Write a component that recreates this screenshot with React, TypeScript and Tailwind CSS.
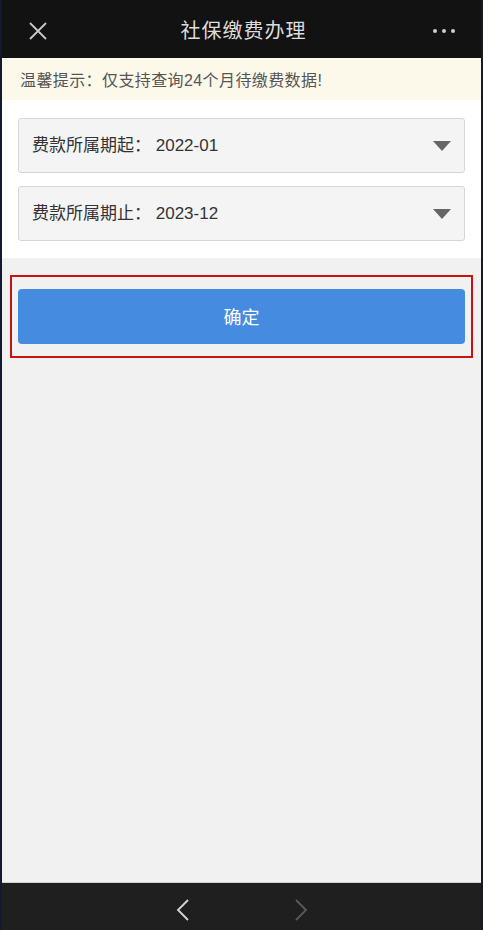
const font = "font-['Liberation_Sans','Noto_Sans_CJK_SC',sans-serif]";

const periods = [
  { label: "费款所属期起：", value: "2022-01" },
  { label: "费款所属期止：", value: "2023-12" },
];

const App = () => {
  return (
    <div className={`h-[930px] w-[483px] bg-[#141a2c] pl-[2px] pr-[2px] ${font}`}>
      <div className="flex h-full flex-col bg-[#f1f1f1]">
        {/* header */}
        <div className="flex h-[58px] shrink-0 items-center justify-between bg-[#121212] px-[26px]">
          <svg width="20" height="20" viewBox="0 0 20 20" className="mt-[4px]">
            <path d="M2 2 L18 18 M18 2 L2 18" stroke="#c9c9c9" strokeWidth="1.8" fill="none" />
          </svg>
          <h1 className="ml-[6px] mt-[3px] text-[20px] tracking-[1px] text-[#dcdcdc]">社保缴费办理</h1>
          <div className="mt-[4px] flex gap-[5px]">
            <span className="h-[4px] w-[4px] rounded-full bg-[#cfcfcf]" />
            <span className="h-[4px] w-[4px] rounded-full bg-[#cfcfcf]" />
            <span className="h-[4px] w-[4px] rounded-full bg-[#cfcfcf]" />
          </div>
        </div>

        {/* tip */}
        <div className="flex h-[42px] shrink-0 items-center bg-[#fcf8ea] px-[18px] pt-[3px] text-[16px] tracking-[0.4px] text-[#555]">
          温馨提示：仅支持查询24个月待缴费数据!
        </div>

        {/* selects */}
        <div className="flex flex-col gap-[13px] bg-white px-[16px] pb-[17px] pt-[18px]">
          {periods.map((p) => (
            <div
              key={p.label}
              className="flex h-[55px] items-center justify-between rounded-[3px] border border-[#d6d6d6] bg-[#f4f4f4] pl-[13px] pr-[13px]"
            >
              <span className="text-[17px] text-[#333]">
                {p.label} {p.value}
              </span>
              <svg width="18" height="10" viewBox="0 0 18 10">
                <path d="M0 0 L18 0 L9 10 Z" fill="#666" />
              </svg>
            </div>
          ))}
        </div>

        {/* confirm */}
        <div className="px-[8px] pt-[17px]">
          <div className="border-2 border-[#cc1111] px-[6px] py-[12px]">
            <button className="flex h-[55px] w-full items-center justify-center rounded-[4px] bg-[#458ce1] pt-[4px] text-[18px] text-white">
              确定
            </button>
          </div>
        </div>

        <div className="flex-1" />

        {/* bottom nav */}
        <div className="flex h-[48px] shrink-0 items-center justify-center gap-[104px] border-t border-[#d0d0d0] bg-[#1f1f1f]">
          <svg width="14" height="22" viewBox="0 0 14 22" className="mt-[6px]">
            <path d="M12 1 L2 11 L12 21" stroke="#d6d6d6" strokeWidth="1.8" fill="none" />
          </svg>
          <svg width="14" height="22" viewBox="0 0 14 22" className="mt-[6px]">
            <path d="M2 1 L12 11 L2 21" stroke="#5a5a5a" strokeWidth="1.8" fill="none" />
          </svg>
        </div>
      </div>
    </div>
  );
};

export default App;
